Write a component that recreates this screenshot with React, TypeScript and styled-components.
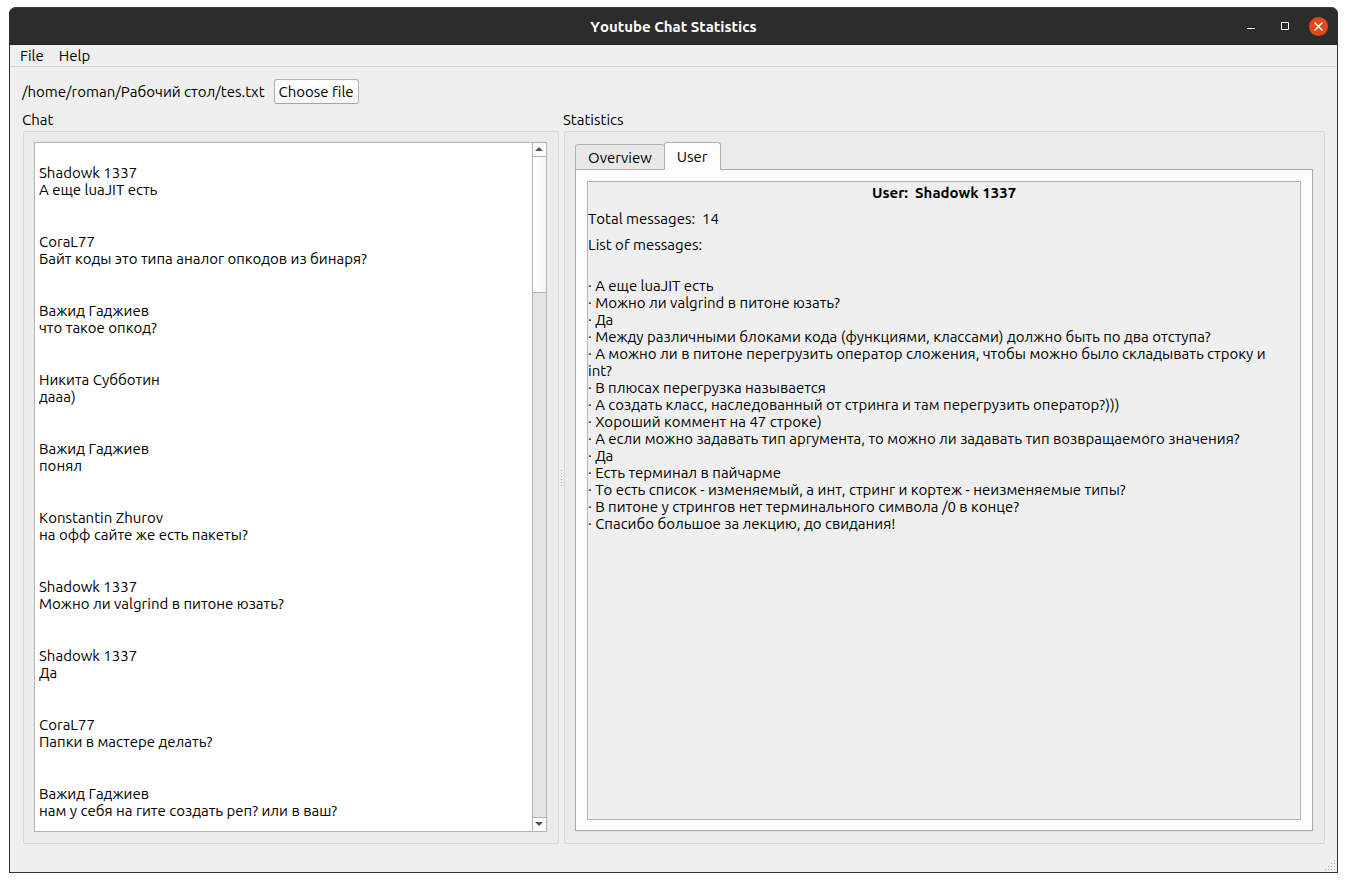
import React from "react";
import styled, { createGlobalStyle, css } from "styled-components";

const GlobalStyle = createGlobalStyle`
  *, *::before, *::after { box-sizing: border-box; }
  body {
    margin: 0;
    background: #fff;
    color: #000;
    font-family: Ubuntu, "Noto Sans", sans-serif;
    font-size: 15px;
    line-height: 17px;
    font-kerning: none;
    font-variant-ligatures: none;
  }
  button { font: inherit; font-kerning: inherit; font-variant-ligatures: inherit; color: inherit; }
`;

const Page = styled.div`
  display: flex;
  min-height: 100vh;
  padding: 7px 9px 9px;
`;

const Window = styled.div`
  flex: 1;
  min-width: 0;
  display: flex;
  flex-direction: column;
  border-radius: 7px 7px 0 0;
  background: #efefef;
  border: 1px solid #333;
  border-top: 0;
  position: relative;
`;

const TitleBar = styled.header`
  display: grid;
  grid-template-columns: 1fr auto 1fr;
  align-items: center;
  height: 38px;
  margin: 0 -1px;
  padding: 0 10px;
  color: #fff;
  background: #2c2c2c;
  border-top: 1px solid #3f3f3f;
  border-bottom: 1px solid #222;
  border-radius: 7px 7px 0 0;
`;

const Title = styled.h1`
  grid-column: 2;
  margin: 0;
  font-size: 15px;
  font-weight: 700;
`;

const WindowControls = styled.div`
  display: flex;
  justify-content: flex-end;
  gap: 15px;
`;

const ControlButton = styled.button<{ $close?: boolean }>`
  display: grid;
  place-items: center;
  width: 19px;
  height: 19px;
  padding: 0;
  border: 0;
  border-radius: 50%;
  background: ${(p) => (p.$close ? "#e2491a" : "transparent")};
  color: #fff;
`;

const MenuBar = styled.nav`
  display: flex;
  gap: 15px;
  height: 22px;
  padding: 0 10px;
  align-items: center;
  border-bottom: 1px solid #d3d3d3;
`;

const MenuItem = styled.button`
  padding: 0;
  border: 0;
  background: none;
`;

const Content = styled.main`
  flex: 1;
  display: flex;
  flex-direction: column;
  padding: 12px 12px 28px;
`;

const FileRow = styled.div`
  display: flex;
  align-items: center;
  gap: 9px;
  height: 25px;
`;

const ChooseButton = styled.button`
  height: 25px;
  padding: 0 4px;
  border: 1px solid #b2b2b2;
  border-bottom-color: #a4a4a4;
  border-radius: 3px;
  background: linear-gradient(#fff, #f6f6f6);
`;

const Splitter = styled.div`
  flex: 1;
  display: flex;
  gap: 5px;
  margin-top: 7px;
`;

const Column = styled.section<{ $grow: number }>`
  flex: ${(p) => p.$grow} 1 0;
  min-width: 0;
  display: flex;
  flex-direction: column;
`;

const GroupTitle = styled.h2`
  margin: 0;
  height: 20px;
  font-size: 15px;
  font-weight: 400;
`;

const GroupBox = styled.div`
  flex: 1;
  display: flex;
  flex-direction: column;
  margin-left: 1px;
  padding: 10px 11px 11px 10px;
  border: 1px solid #d6d6d6;
  border-radius: 2px;
  background: #ebebeb;
`;

const Grip = styled.div`
  align-self: center;
  display: grid;
  gap: 2px;
  margin: 0 -4px 0 -3px;
  padding-top: 1px;
  z-index: 1;
`;

const Dot = styled.i`
  width: 1px;
  height: 1px;
  background: #aaa;
`;

const ChatBox = styled.div`
  flex: 1;
  display: flex;
  border: 1px solid #b4b4b4;
  background: #fff;
`;

const ChatList = styled.ul`
  flex: 1;
  min-width: 0;
  margin: 0;
  padding: 21px 4px 11px;
  list-style: none;
`;

const ChatItem = styled.li`
  & + & { margin-top: 35px; }
`;

const Line = styled.div``;

const ScrollBar = styled.div`
  display: flex;
  flex-direction: column;
  width: 14px;
  border-left: 1px solid #b4b4b4;
  background: #e4e4e4;
`;

const ScrollButton = styled.button<{ $down?: boolean }>`
  display: grid;
  place-items: center;
  height: 14px;
  padding: 0;
  border: 0 solid #b4b4b4;
  ${(p) => (p.$down ? css`border-top-width: 1px;` : css`border-bottom-width: 1px;`)}
  background: #fcfcfc;
`;

const ScrollTrack = styled.div`
  flex: 1;
`;

const ScrollThumb = styled.div`
  height: 136px;
  border-bottom: 1px solid #b4b4b4;
  background: linear-gradient(90deg, #fff, #f6f6f6);
`;

const Tabs = styled.div`
  display: flex;
  align-items: flex-end;
  position: relative;
  margin-bottom: -1px;
`;

const Tab = styled.button<{ $active?: boolean }>`
  height: ${(p) => (p.$active ? 28 : 26)}px;
  padding: 0 12px;
  border: 1px solid #b0b0b0;
  border-radius: 3px 3px 0 0;
  background: #e8e8e8;
  ${(p) =>
    p.$active &&
    css`
      margin-left: -1px;
      border-bottom-color: #fcfcfc;
      background: #fcfcfc;
    `}
`;

const TabPane = styled.div`
  flex: 1;
  display: flex;
  margin-bottom: 1px;
  padding: 11px 11px 10px;
  border: 1px solid #aaa;
  box-shadow: 0 1px 0 #dedede;
  background: #fcfcfc;
`;

const UserPanel = styled.div`
  flex: 1;
  min-width: 0;
  padding: 2px 0;
  border: 1px solid #b4b4b4;
  background: #efefef;
`;

const UserName = styled.h3`
  margin: 0;
  font-size: 15px;
  font-weight: 700;
  text-align: center;
  white-space: pre;
`;

const Stat = styled.p`
  margin: 9px 0 0;
  white-space: pre;
`;

const Messages = styled.ul`
  margin: 24px 0 0;
  padding: 0 16px 0 0;
  list-style: none;
`;

const SizeGrip = styled.svg`
  position: absolute;
  right: 2px;
  bottom: 2px;
`;

const chat = [
  ["Shadowk 1337", "А еще luaJIT есть"],
  ["CoraL77", "Байт коды это типа аналог опкодов из бинаря?"],
  ["Важид Гаджиев", "что такое опкод?"],
  ["Никита Субботин", "дааа)"],
  ["Важид Гаджиев", "понял"],
  ["Konstantin Zhurov", "на офф сайте же есть пакеты?"],
  ["Shadowk 1337", "Можно ли valgrind в питоне юзать?"],
  ["Shadowk 1337", "Да"],
  ["CoraL77", "Папки в мастере делать?"],
  ["Важид Гаджиев", "нам у себя на гите создать реп? или в ваш?"],
];

const userMessages = [
  "А еще luaJIT есть",
  "Можно ли valgrind в питоне юзать?",
  "Да",
  "Между различными блоками кода (функциями, классами) должно быть по два отступа?",
  "А можно ли в питоне перегрузить оператор сложения, чтобы можно было складывать строку и int?",
  "В плюсах перегрузка называется",
  "А создать класс, наследованный от стринга и там перегрузить оператор?)))",
  "Хороший коммент на 47 строке)",
  "А если можно задавать тип аргумента, то можно ли задавать тип возвращаемого значения?",
  "Да",
  "Есть терминал в пайчарме",
  "То есть список - изменяемый, а инт, стринг и кортеж - неизменяемые типы?",
  "В питоне у стрингов нет терминального символа /0 в конце?",
  "Спасибо большое за лекцию, до свидания!",
];

const gripDots = [[9, 0], [6, 3], [9, 3], [3, 6], [6, 6], [9, 6], [0, 9], [3, 9], [6, 9], [9, 9]];

export default function App() {
  return (
    <Page>
      <GlobalStyle />
      <Window>
        <TitleBar>
          <Title>Youtube Chat Statistics</Title>
          <WindowControls>
            <ControlButton aria-label="Minimize">
              <svg width="19" height="19"><path d="M6 11.5h8" stroke="currentColor" /></svg>
            </ControlButton>
            <ControlButton aria-label="Maximize">
              <svg width="19" height="19"><path d="M6.500 5.500h7v7h-7z" fill="none" stroke="currentColor" /></svg>
            </ControlButton>
            <ControlButton $close aria-label="Close">
              <svg width="19" height="19"><path d="M5.500 5.500l8 8M13.500 5.500l-8 8" stroke="currentColor" strokeWidth="1.400" /></svg>
            </ControlButton>
          </WindowControls>
        </TitleBar>
        <MenuBar>
          <MenuItem>File</MenuItem>
          <MenuItem>Help</MenuItem>
        </MenuBar>
        <Content>
          <FileRow>
            <span>/home/roman/Рабочий стол/tes.txt</span>
            <ChooseButton>Choose file</ChooseButton>
          </FileRow>
          <Splitter>
            <Column $grow={537}>
              <GroupTitle>Chat</GroupTitle>
              <GroupBox>
                <ChatBox>
                  <ChatList>
                    {chat.map(([name, text], i) => (
                      <ChatItem key={i}>
                        <Line>{name}</Line>
                        <Line>{text}</Line>
                      </ChatItem>
                    ))}
                  </ChatList>
                  <ScrollBar>
                    <ScrollButton aria-label="Scroll up">
                      <svg width="9" height="5"><path d="M0 4L4 0l4 4z" fill="#555" /></svg>
                    </ScrollButton>
                    <ScrollTrack><ScrollThumb /></ScrollTrack>
                    <ScrollButton $down aria-label="Scroll down">
                      <svg width="9" height="5"><path d="M0 0l4 4 4-4z" fill="#555" /></svg>
                    </ScrollButton>
                  </ScrollBar>
                </ChatBox>
              </GroupBox>
            </Column>
            <Grip aria-hidden="true">
              {[0, 1, 2, 3, 4, 5].map((n) => <Dot key={n} />)}
            </Grip>
            <Column $grow={762}>
              <GroupTitle>Statistics</GroupTitle>
              <GroupBox>
                <Tabs role="tablist">
                  <Tab role="tab" aria-selected="false">Overview</Tab>
                  <Tab role="tab" aria-selected="true" $active>User</Tab>
                </Tabs>
                <TabPane role="tabpanel">
                  <UserPanel>
                    <UserName>{"User:  Shadowk 1337"}</UserName>
                    <Stat>{"Total messages:  14"}</Stat>
                    <Stat>List of messages:</Stat>
                    <Messages>
                      {userMessages.map((text, i) => <li key={i}>{`· ${text}`}</li>)}
                    </Messages>
                  </UserPanel>
                </TabPane>
              </GroupBox>
            </Column>
          </Splitter>
        </Content>
        <SizeGrip width="10" height="10" aria-hidden="true">
          {gripDots.map(([x, y]) => <rect key={`${x}-${y}`} x={x} y={y} width="1" height="1" fill="#aaa" />)}
        </SizeGrip>
      </Window>
    </Page>
  );
}
